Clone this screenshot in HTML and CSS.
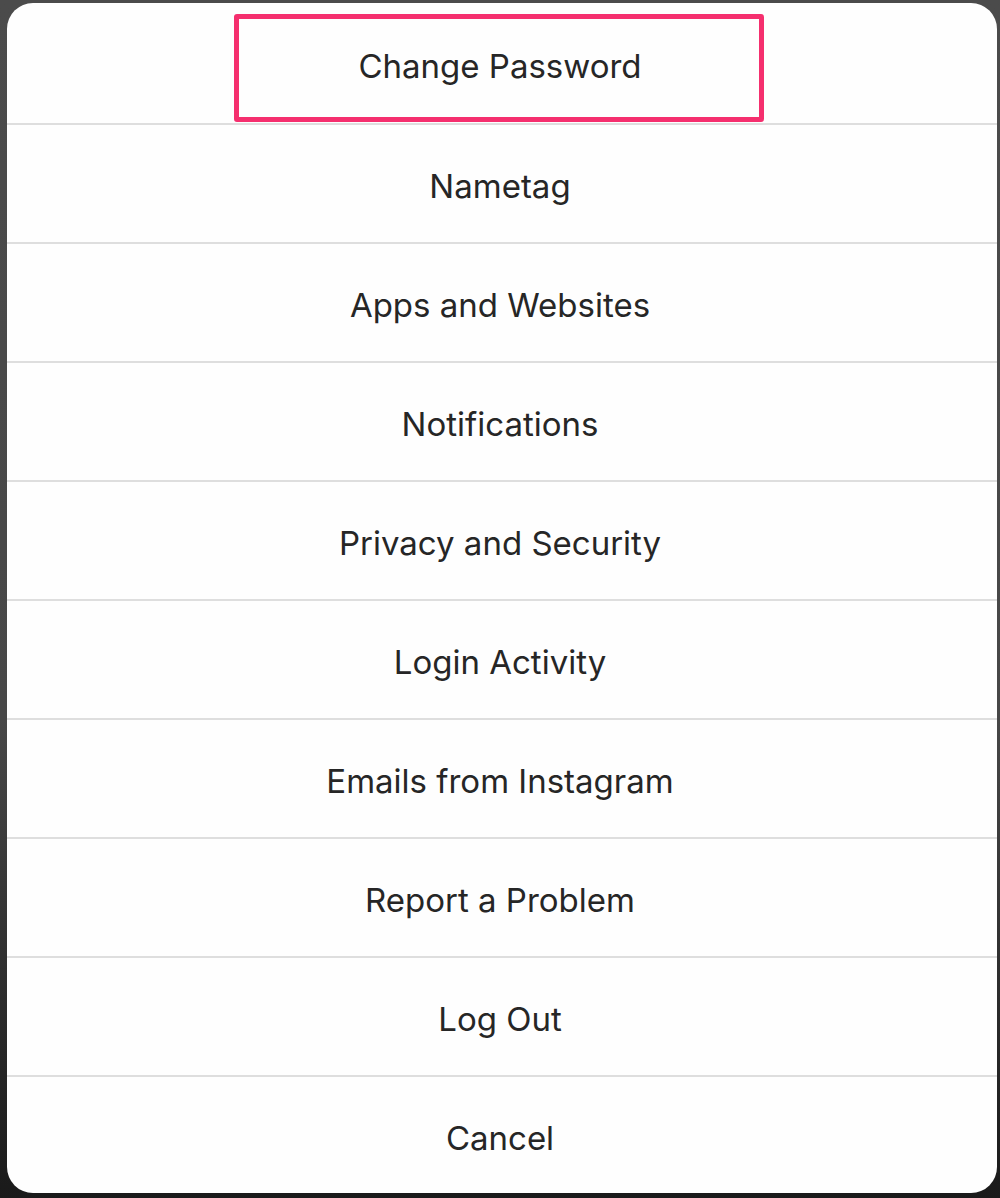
FILE: index.html
```html
<!DOCTYPE html>
<html>
<head>
<meta charset="utf-8">
<link rel="stylesheet" href="styles.css">
</head>
<body>
<div class="sheet">
  <div class="row first"><span>Change Password</span><div class="highlight"></div></div>
  <div class="row"><span>Nametag</span></div>
  <div class="row"><span>Apps and Websites</span></div>
  <div class="row"><span>Notifications</span></div>
  <div class="row"><span>Privacy and Security</span></div>
  <div class="row"><span>Login Activity</span></div>
  <div class="row"><span>Emails from Instagram</span></div>
  <div class="row"><span>Report a Problem</span></div>
  <div class="row"><span>Log Out</span></div>
  <div class="row"><span>Cancel</span></div>
</div>
</body>
</html>
```
FILE: styles.css
```css
html, body {
  margin: 0;
  padding: 0;
}
body {
  width: 1000px;
  height: 1198px;
  background: linear-gradient(#4b4b4b 0%, #474747 60%, #2a2a2a 85%, #1a1a1a 100%);
  overflow: hidden;
  font-family: Inter, "Noto Sans", sans-serif;
}
.sheet {
  margin: 3px 3px 0 7px;
  width: 990px;
  height: 1190px;
  background: #fefefe;
  border-radius: 26px;
  overflow: hidden;
  display: flex;
  flex-direction: column;
}
.row {
  flex-shrink: 0;
  height: 112px;
  border-top: 2px solid #dedede;
  display: flex;
  align-items: center;
  justify-content: center;
  font-size: 33px;
  color: #262626;
  padding-top: 5px;
  padding-right: 4px;
  box-sizing: content-box;
}
.row.first {
  border-top: none;
  height: 115px;
  position: relative;
}
.highlight {
  position: absolute;
  left: 227px;
  top: 11px;
  width: 530px;
  height: 108px;
  box-sizing: border-box;
  border: 5px solid #f52f6e;
  border-radius: 3px;
}
```
